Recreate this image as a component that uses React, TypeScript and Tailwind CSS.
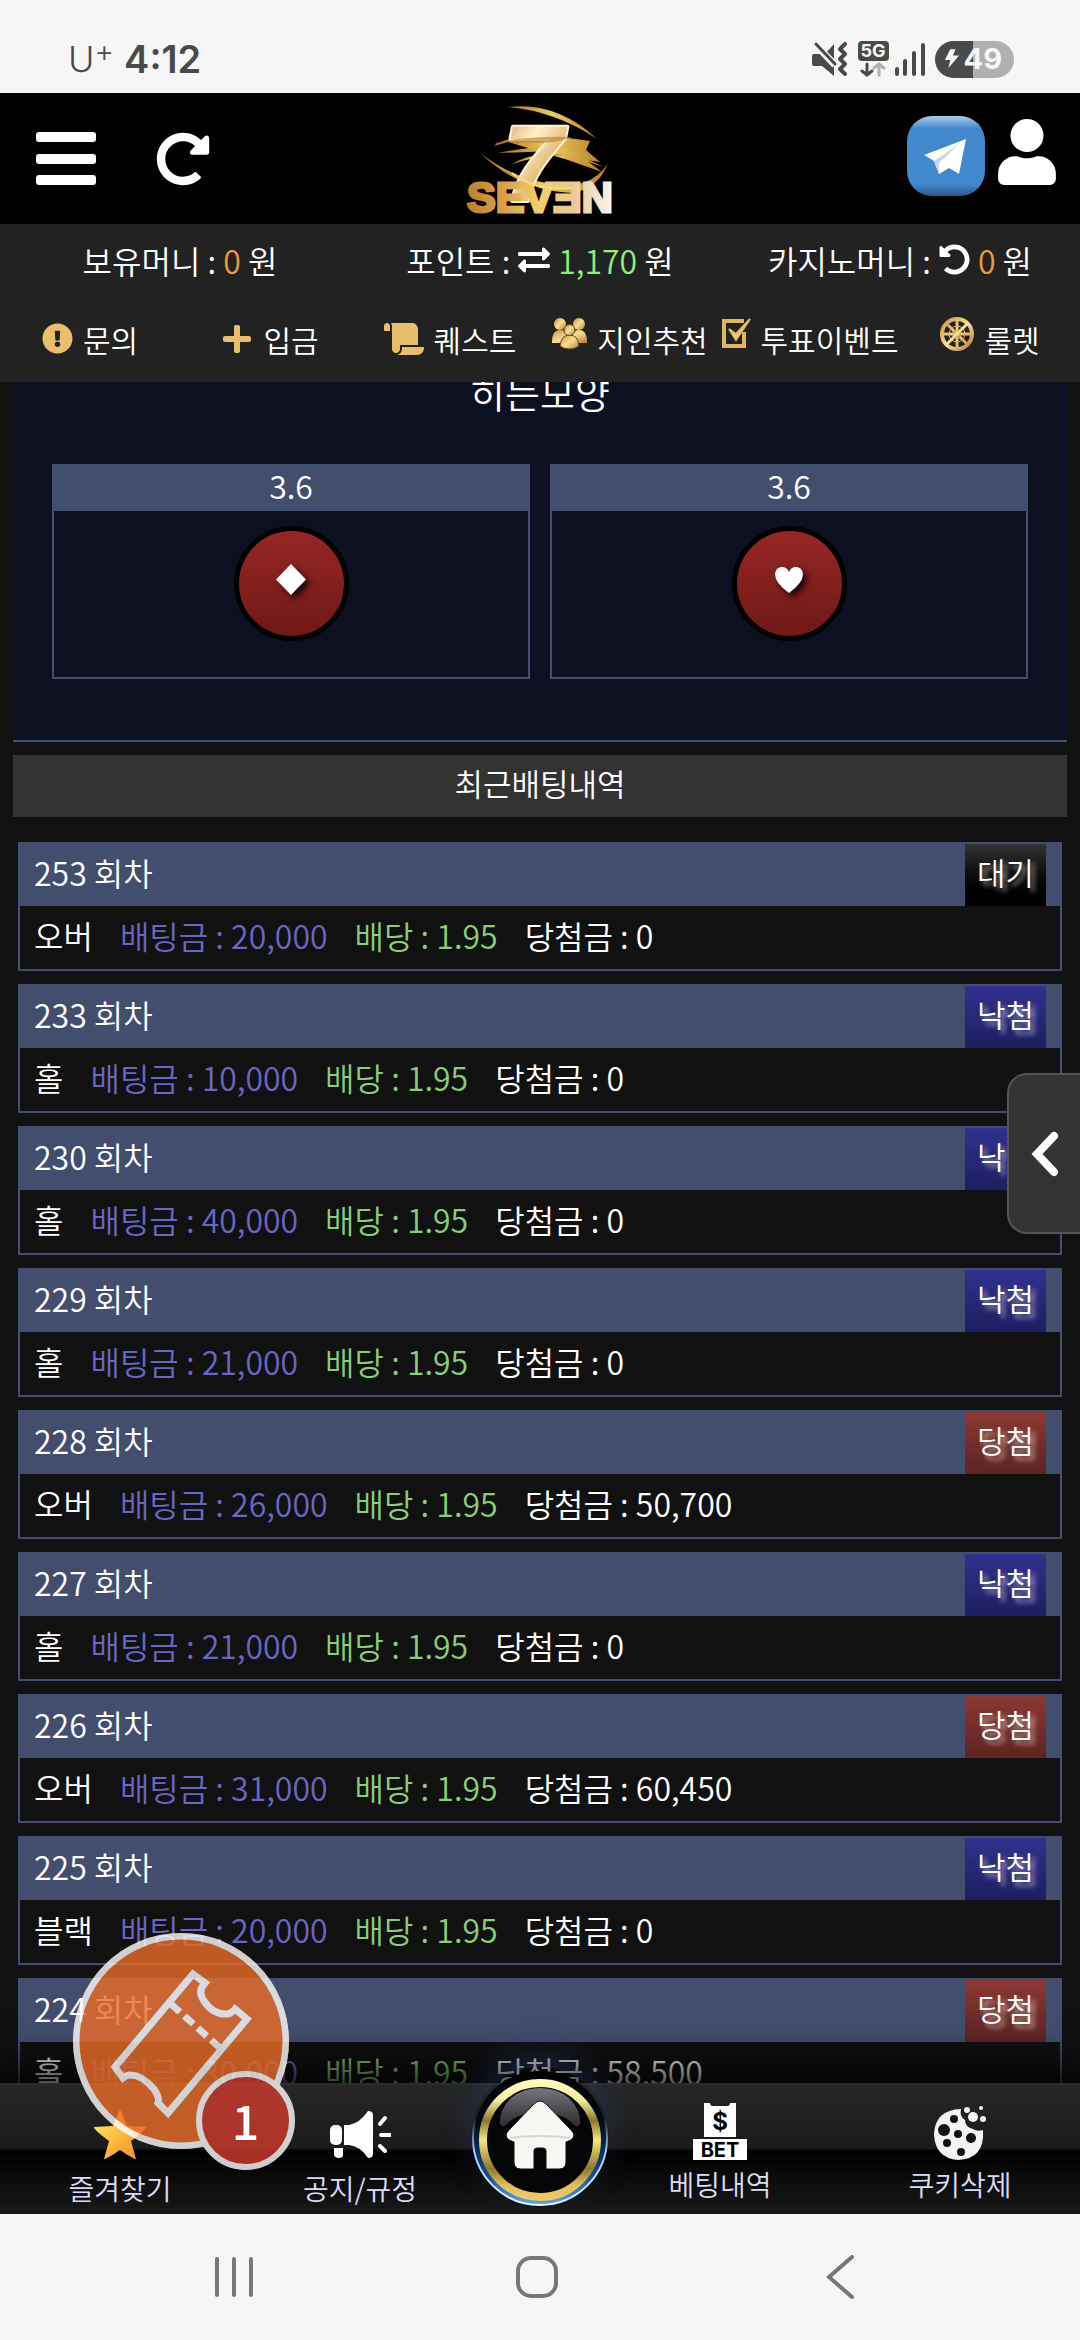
import React from "react";
import {
  FaExchangeAlt,
  FaExclamationCircle,
  FaPlus,
  FaRedoAlt,
  FaScroll,
  FaUndoAlt,
  FaUser,
} from "react-icons/fa";

type Result = "대기" | "낙첨" | "당첨";

interface Bet {
  round: number;
  pick: string;
  stake: string;
  odds: string;
  payout: string;
  result: Result;
}

const bets: Bet[] = [
  { round: 253, pick: "오버", stake: "20,000", odds: "1.95", payout: "0", result: "대기" },
  { round: 233, pick: "홀", stake: "10,000", odds: "1.95", payout: "0", result: "낙첨" },
  { round: 230, pick: "홀", stake: "40,000", odds: "1.95", payout: "0", result: "낙첨" },
  { round: 229, pick: "홀", stake: "21,000", odds: "1.95", payout: "0", result: "낙첨" },
  { round: 228, pick: "오버", stake: "26,000", odds: "1.95", payout: "50,700", result: "당첨" },
  { round: 227, pick: "홀", stake: "21,000", odds: "1.95", payout: "0", result: "낙첨" },
  { round: 226, pick: "오버", stake: "31,000", odds: "1.95", payout: "60,450", result: "당첨" },
  { round: 225, pick: "블랙", stake: "20,000", odds: "1.95", payout: "0", result: "낙첨" },
  { round: 224, pick: "홀", stake: "30,000", odds: "1.95", payout: "58,500", result: "당첨" },
];

const resultStyle: Record<Result, string> = {
  대기: "from-[#333333] to-black",
  낙첨: "from-[#31318f] to-[#1e1e60]",
  당첨: "from-[#8c3835] to-[#5c2422]",
};

function StatusBar() {
  return (
    <div className="flex h-[93px] shrink-0 items-center justify-between bg-[#f6f6f6] pt-[25px] pr-[66px] pl-[68px] font-[Inter,sans-serif] text-[#4a4a4a]">
      <div className="flex items-center gap-[10px]">
        <span className="flex items-start text-4xl font-light">
          U<span className="text-[30px] leading-6">+</span>
        </span>
        <span className="text-[38px] font-semibold">4:12</span>
      </div>
      <div className="flex items-center gap-[6px]">
        <svg width="36" height="34" viewBox="0 0 36 34" fill="#4a4a4a" aria-label="vibrate">
          <path d="M13 12 22 2v20zM2 12h8l12 10v12L10 24H2q-2 0-2-2v-8q0-2 2-2z" />
          <path d="m3 2 20 21" stroke="#f6f6f6" strokeWidth="7" />
          <path d="m4 2 19 20" stroke="#4a4a4a" strokeWidth="3" strokeLinecap="round" />
          <path d="m33 2-5 5 5 5-5 5 5 5-5 5 5 5" fill="none" stroke="#4a4a4a" strokeWidth="4" strokeLinejoin="round" strokeLinecap="round" />
        </svg>
        <div className="flex flex-col items-center pl-1">
          <span className="h-5 rounded-[4px] bg-[#4a4a4a] px-[3px] text-[18px] leading-5 font-bold text-[#f6f6f6]">5G</span>
          <svg width="26" height="16" viewBox="0 0 26 16" fill="none" strokeWidth="3" strokeLinecap="round">
            <path d="M7 3v11M2 10l5 4 5-4" stroke="#4a4a4a" />
            <path d="M19 14V3m-5 4 5-4 5 4" stroke="#b0b0b0" />
          </svg>
        </div>
        <svg width="30" height="34" viewBox="0 0 30 34" stroke="#4a4a4a" strokeWidth="4" strokeLinecap="round" aria-label="signal">
          <path d="M2 27v5M10 19v13M19 11v21M28 3v29" />
        </svg>
        <div className="ml-1 flex h-[37px] items-center gap-1 rounded-full bg-[linear-gradient(90deg,#4a4a4a_48%,#b0b0b0_48%)] pr-3 pl-[9px] text-[29px] font-bold text-[#f6f6f6]">
          <svg width="16" height="20" viewBox="0 0 18 22" fill="currentColor">
            <path d="M7 0h6l-3 7h7L5 21l2-9H1z" />
          </svg>
          <span>49</span>
        </div>
      </div>
    </div>
  );
}

function Logo() {
  return (
    <svg width="148" height="112" viewBox="0 0 148 112" aria-label="7 SEVEN">
      <defs>
        <linearGradient id="goldWord" x1="0" y1="0" x2="1" y2="0">
          <stop offset="0" stopColor="#bd802a" />
          <stop offset=".25" stopColor="#d9a04a" />
          <stop offset=".5" stopColor="#f1cf6a" />
          <stop offset=".72" stopColor="#e8c995" />
          <stop offset="1" stopColor="#fbf6f0" />
        </linearGradient>
        <linearGradient id="goldSeven" x1="0" y1="0" x2=".7" y2="1">
          <stop offset="0" stopColor="#c88f31" />
          <stop offset=".4" stopColor="#fff0cf" />
          <stop offset=".65" stopColor="#e5bd78" />
          <stop offset="1" stopColor="#fff6dc" />
        </linearGradient>
        <linearGradient id="swoosh" x1="0" y1="0" x2="1" y2="0">
          <stop offset="0" stopColor="#9a6a1c" />
          <stop offset=".5" stopColor="#f0cc62" />
          <stop offset="1" stopColor="#b67e22" />
        </linearGradient>
      </defs>
      <g fill="url(#swoosh)">
        <path d="M41 4q50-6 90 32-42-28-90-32z" />
        <path d="m28 41 24-8 50 2 22 3-4 9 14 12-14-2 16 12-34-12-60-18-14 4 4-4z" />
        <path d="M32 50q30-6 58-8l48 22-50-16z" />
        <path d="M14 50q40 38 92 40 26-4 36-30-12 20-38 22Q56 82 14 50z" />
        <path d="M44 62q24-14 54-10-26 0-54 10z" />
      </g>
      <text x="37" y="98" fontFamily="Liberation Sans, sans-serif" fontWeight="700" fontStyle="italic" fontSize="108" fill="url(#goldSeven)" stroke="#fff3d6" strokeWidth="4" strokeLinejoin="round" paintOrder="stroke">7</text>
      <path d="M42 37q36-4 64-3-24 10-64 3z" fill="#b67c24" opacity=".6" />
      <text x="1" y="109" fontFamily="Liberation Sans, sans-serif" fontWeight="700" fontSize="43" fill="url(#goldWord)" stroke="url(#goldWord)" strokeWidth="3">SEVƎN</text>
      <path d="M46 70q22 18 60 15" fill="none" stroke="#f7dc7c" strokeWidth="2" />
    </svg>
  );
}

function TelegramIcon() {
  return (
    <svg width="78" height="80" viewBox="0 0 78 80" aria-hidden="true">
      <defs>
        <linearGradient id="tg" x1="0" y1="0" x2="0" y2="1">
          <stop offset="0" stopColor="#a9cbe9" />
          <stop offset=".16" stopColor="#4288cd" />
          <stop offset=".85" stopColor="#4288cd" />
          <stop offset="1" stopColor="#2b5a88" />
        </linearGradient>
      </defs>
      <rect width="78" height="80" rx="25" fill="url(#tg)" />
      <path d="m17 39 42-16-7 35-10-6-10 6-5-13z" fill="#fff" />
      <path d="m27 45 25-17-20 19v11z" fill="#c5d7e8" />
    </svg>
  );
}

function AppHeader() {
  return (
    <header className="relative flex h-[131px] shrink-0 items-center justify-between bg-black pr-6 pl-9 text-white">
      <div className="flex items-center gap-[60px]">
        <button type="button" aria-label="메뉴">
          <svg width="60" height="54" viewBox="0 0 60 54" fill="currentColor">
            <rect width="60" height="10" rx="3" />
            <rect y="22" width="60" height="10" rx="3" />
            <rect y="43" width="60" height="10" rx="3" />
          </svg>
        </button>
        <button type="button" aria-label="새로고침">
          <FaRedoAlt size={54} />
        </button>
      </div>
      <a href="#home" aria-label="SEVEN" className="absolute left-1/2 -translate-x-1/2">
        <Logo />
      </a>
      <div className="flex items-center gap-[13px] pb-[6px]">
        <a href="#telegram" aria-label="텔레그램">
          <TelegramIcon />
        </a>
        <button type="button" aria-label="내 정보" className="pb-2">
          <FaUser className="h-[66px] w-[58px]" />
        </button>
      </div>
    </header>
  );
}

function GoldDefs() {
  return (
    <defs>
      <linearGradient id="gold" x1="0" y1="0" x2="1" y2="1">
        <stop offset="0" stopColor="#c98f45" />
        <stop offset=".5" stopColor="#f6e08e" />
        <stop offset="1" stopColor="#b87a35" />
      </linearGradient>
    </defs>
  );
}

function PeopleIcon() {
  return (
    <svg width="35" height="32" viewBox="0 0 35 32" fill="url(#gold)">
      <GoldDefs />
      <circle cx="8" cy="6" r="6" />
      <circle cx="27" cy="6" r="6" />
      <path d="M0 24q0-12 8-12 6 0 7 5l-6 8H0zM35 24q0-12-8-12-6 0-7 5l6 8h9z" />
      <g stroke="#5c4520" strokeWidth="1">
        <path d="M8 28q1-11 9.500-11T27 28q-4 3-9.500 3T8 28z" />
        <circle cx="17.500" cy="12" r="5.500" />
      </g>
    </svg>
  );
}

function VoteIcon() {
  return (
    <svg width="29" height="32" viewBox="0 0 29 32" fill="none">
      <path d="M22 3H2v25h20V14" stroke="#e0b65e" strokeWidth="4" />
      <path d="m7 11 7 11L28 1 14 16z" fill="#f3d987" stroke="#e5b963" strokeWidth="2" />
    </svg>
  );
}

function WheelIcon() {
  return (
    <svg width="34" height="34" viewBox="0 0 34 34" fill="none" stroke="url(#gold)">
      <circle cx="17" cy="17" r="15" strokeWidth="4" />
      <path d="m17 2 .1 30M2 17l30 .1M6 6l22 22M28 6 6 28" strokeWidth="3" />
      <circle cx="17" cy="17" r="8" strokeWidth="1" />
      <circle cx="17" cy="17" r="3" fill="#f6e08e" strokeWidth="2" />
    </svg>
  );
}

const menu = [
  { label: "문의", icon: <FaExclamationCircle size={31} />, raised: false },
  { label: "입금", icon: <FaPlus size={32} />, raised: false },
  { label: "퀘스트", icon: <FaScroll className="h-8 w-10" />, raised: false },
  { label: "지인추천", icon: <PeopleIcon />, raised: true },
  { label: "투표이벤트", icon: <VoteIcon />, raised: true },
  { label: "룰렛", icon: <WheelIcon />, raised: true },
];

function InfoBar() {
  return (
    <section className="shrink-0 bg-[#222222] leading-10 text-white">
      <div className="grid h-[77px] grid-cols-3 items-center pb-[6px] text-center text-[32px] whitespace-nowrap">
        <p>
          보유머니 : <span className="text-[#eb9c3c]">0</span> 원
        </p>
        <p className="flex items-center justify-center gap-2">
          포인트 :
          <button type="button" aria-label="포인트 전환">
            <FaExchangeAlt size={32} />
          </button>
          <span>
            <span className="text-[#8bf177]">1,170</span> 원
          </span>
        </p>
        <p className="flex items-center justify-center gap-2">
          카지노머니 :
          <button type="button" aria-label="카지노머니 새로고침">
            <FaUndoAlt size={31} />
          </button>
          <span>
            <span className="text-[#eb9c3c]">0</span> 원
          </span>
        </p>
      </div>
      <nav className="grid h-[81px] grid-cols-6 items-center pb-[6px] text-[30px]">
        {menu.map((m) => (
          <a key={m.label} href={"#" + m.label} className="flex items-center justify-center gap-[10px] whitespace-nowrap">
            <span className={m.raised ? "shrink-0 pb-[10px] text-[#eabf6b]" : "shrink-0 text-[#eabf6b]"}>{m.icon}</span>
            {m.label}
          </a>
        ))}
      </nav>
    </section>
  );
}

function SuitOption({ odds, label, children }: { odds: string; label: string; children: React.ReactNode }) {
  return (
    <div className="border-2 border-[#434e6e] pb-9">
      <div className="h-[45px] bg-[#434e6e] text-center text-[32px] leading-[38px]">{odds}</div>
      <div className="flex justify-center pt-[15px]">
        <button
          type="button"
          aria-label={label}
          className="flex size-[115px] items-center justify-center rounded-full border-[5px] border-black bg-linear-to-b from-[#962625] to-[#6f1917] pb-2"
        >
          {children}
        </button>
      </div>
    </div>
  );
}

function BetCard({ bet }: { bet: Bet }) {
  return (
    <li className="border-2 border-[#434e6e] text-[32px]">
      <div className="flex h-[62px] items-center justify-between bg-[#434e6e] pr-[14px] pl-[14px]">
        <span className="pb-[6px]">{bet.round} 회차</span>
        <span
          className={
            "flex h-full items-center bg-linear-to-b px-3 pb-[6px] text-[31px] [text-shadow:4px_4px_5px_rgba(255,255,255,0.6)] " +
            resultStyle[bet.result]
          }
        >
          {bet.result}
        </span>
      </div>
      <div className="flex h-[63px] items-center gap-[27px] pb-[6px] pl-[14px]">
        <span>{bet.pick}</span>
        <span className="text-[#6a67c4]">배팅금 : {bet.stake}</span>
        <span className="text-[#88cf75]">배당 : {bet.odds}</span>
        <span>당첨금 : {bet.payout}</span>
      </div>
    </li>
  );
}

function StarIcon() {
  return (
    <svg width="54" height="52" viewBox="0 0 54 52">
      <defs>
        <linearGradient id="star" x1="0" y1="0" x2="1" y2="1">
          <stop offset=".2" stopColor="#ffdf4d" />
          <stop offset=".6" stopColor="#fbb03c" />
          <stop offset="1" stopColor="#e88a2a" />
        </linearGradient>
      </defs>
      <path d="m27 1 7 17 19 1q1 2-15 14l5 18q-1 1-16-9-15 10-16 9l5-18Q0 21 1 19l19-1z" fill="url(#star)" />
    </svg>
  );
}

function MegaphoneIcon() {
  return (
    <svg width="62" height="50" viewBox="0 0 62 50" fill="#fff">
      <rect x="1" y="15" width="12" height="20" rx="5" />
      <path d="M15 15h5q11-2 19-14 5 0 5 4v39q0 4-5 4-8-12-19-13h-5zM5 38h9v7q0 3-4 3t-5-3z" />
      <path d="m51 14 5-6M52 25h9M51 36l5 5" stroke="#fff" strokeWidth="4" strokeLinecap="round" />
    </svg>
  );
}

function BetIcon() {
  return (
    <svg width="54" height="58" viewBox="0 0 54 58">
      <path d="M11 1h6q0 3 3 3h14q3 0 3-3h6v34H11z" fill="#fff" />
      <text x="27" y="28" textAnchor="middle" fontFamily="Inter, sans-serif" fontWeight="700" fontSize="24">$</text>
      <rect y="37" width="54" height="21" fill="#fff" />
      <text x="27" y="55" textAnchor="middle" fontFamily="Inter, sans-serif" fontWeight="700" fontSize="20">BET</text>
    </svg>
  );
}

function CookieIcon() {
  return (
    <svg width="54" height="54" viewBox="0 0 54 54" fill="#f4f4f4">
      <path d="M28 3q-2 7 4 11 0 7 8 9 4 3 10 1 2 29-25 30Q2 52 1 28 2 4 28 3z" />
      <circle cx="40" cy="11" r="5" />
      <circle cx="34" cy="4" r="3" />
      <circle cx="48" cy="2" r="2" />
      <circle cx="50" cy="13" r="3" />
      <g fill="#111">
        <circle cx="21" cy="13" r="4" />
        <circle cx="11" cy="24" r="6" />
        <circle cx="25" cy="28" r="4" />
        <circle cx="38" cy="32" r="5" />
        <circle cx="14" cy="37" r="4" />
        <circle cx="28" cy="46" r="4" />
      </g>
    </svg>
  );
}

function HomeButton() {
  return (
    <svg width="138" height="140" viewBox="0 0 138 140" aria-hidden="true">
      <defs>
        <linearGradient id="blueRim" x1="0" y1="0" x2="0" y2="1">
          <stop offset="0" stopColor="#000" />
          <stop offset=".4" stopColor="#020b1c" />
          <stop offset=".8" stopColor="#17509c" />
          <stop offset="1" stopColor="#5fa8f0" />
        </linearGradient>
        <linearGradient id="rimLine" x1="0" y1="0" x2="0" y2="1">
          <stop offset=".35" stopColor="#d9ecff" stopOpacity="0" />
          <stop offset=".6" stopColor="#9cc9f5" />
          <stop offset="1" stopColor="#e8fbff" />
        </linearGradient>
        <linearGradient id="ring" x1="0" y1="0" x2="0" y2="1">
          <stop offset="0" stopColor="#fffbb8" />
          <stop offset=".15" stopColor="#f7efa0" />
          <stop offset=".33" stopColor="#8c772a" />
          <stop offset=".5" stopColor="#f3e77c" />
          <stop offset=".75" stopColor="#8f7a2c" />
          <stop offset=".9" stopColor="#e3bf5a" />
          <stop offset="1" stopColor="#f0c868" />
        </linearGradient>
        <linearGradient id="gloss" x1="0" y1="0" x2="0" y2="1">
          <stop offset="0" stopColor="#77757c" />
          <stop offset="1" stopColor="#2c2b30" />
        </linearGradient>
      </defs>
      <circle cx="69" cy="71" r="67" fill="url(#blueRim)" stroke="url(#rimLine)" strokeWidth="2" />
      <circle cx="69" cy="73" r="57" fill="#050507" stroke="url(#ring)" strokeWidth="8" />
      <path d="M29 57q-1-14 11-26 12-10 29-10t29 10q12 12 11 26-3 6-10-3-30-20-60 0-7 9-10 3z" fill="url(#gloss)" />
      <path d="M69 34q3 0 6 3l26 27q4 5-1 9l-5 2v20q0 7-7 7H75V84q0-3-3-3h-6q-3 0-3 3v18H50q-7 0-7-7V75l-5-2q-5-4-1-9l26-27q3-3 6-3z" fill="#f6f6f2" stroke="#111" strokeWidth="1" />
      <path d="M38 71q31-4 62 0" stroke="#d8d8d2" strokeWidth="2" fill="none" />
    </svg>
  );
}

function NavItem({ label, icon, raised = false }: { label: string; icon: React.ReactNode; raised?: boolean }) {
  return (
    <a
      href={"#" + label}
      className={
        "flex flex-col items-center justify-end text-[28px] leading-8 whitespace-nowrap text-[#dcdcf8] " +
        (raised ? "gap-2 pb-[14px]" : "gap-3 pb-[10px]")
      }
    >
      {icon}
      {label}
    </a>
  );
}

function BottomNav() {
  return (
    <nav className="relative grid h-[131px] shrink-0 grid-cols-[minmax(0,2fr)_minmax(0,2fr)_minmax(0,1fr)_minmax(0,2fr)_minmax(0,2fr)] border-t-2 border-[#2c2c2c] bg-[linear-gradient(180deg,#262626_0%,#1b1b1b_49%,#000_51%,#191919_100%)] shadow-[0_-6px_36px_12px_rgba(0,0,0,0.8)]">
      <NavItem label="즐겨찾기" icon={<StarIcon />} />
      <NavItem label="공지/규정" icon={<MegaphoneIcon />} />
      <a href="#home" aria-label="홈" className="-mt-[18px] flex justify-center">
        <span className="size-[138px] shrink-0 rounded-full shadow-[0_-14px_36px_-6px_rgba(60,80,160,0.4)]">
          <HomeButton />
        </span>
      </a>
      <NavItem label="베팅내역" icon={<BetIcon />} raised />
      <NavItem label="쿠키삭제" icon={<CookieIcon />} raised />
      <button type="button" aria-label="배팅카트 1" className="absolute bottom-[65px] left-[73px] size-[216px]">
        <span className="absolute inset-0 opacity-80">
          <svg className="size-full rounded-full bg-[#ec6d29]" viewBox="0 0 216 216" fill="none" stroke="#fff">
            <circle cx="108" cy="108" r="105" strokeWidth="7" />
            <path
              d="m120 41 12 9q-8 8-1 18 9 14 24 13 4-1 7-5l12 10-79 94-10-10q2-5-4-14-13-15-25-14-2 0-6 3l-8-11z"
              strokeWidth="7"
            />
            <path d="m98 71 48 43" strokeWidth="7" strokeDasharray="12 6" />
          </svg>
          <span className="absolute -right-[6px] -bottom-[21px] size-[99px] rounded-full border-[6px] border-white bg-[#d03a2e]" />
        </span>
        <span className="absolute -right-[6px] -bottom-[21px] flex size-[99px] items-center justify-center pb-1 text-[48px] leading-none font-medium text-white">
          1
        </span>
      </button>
    </nav>
  );
}

function SystemNav() {
  return (
    <div className="relative grid h-[126px] shrink-0 grid-cols-3 place-items-center bg-[#f6f6f6] pr-[88px] pl-[82px] text-[#777777]">
      <button type="button" aria-label="최근 앱">
        <svg width="40" height="42" viewBox="0 0 40 42" stroke="currentColor" strokeWidth="4" strokeLinecap="round">
          <path d="M3 3v36M20 3v36M37 3v36" />
        </svg>
      </button>
      <button type="button" aria-label="홈 화면">
        <svg width="42" height="42" viewBox="0 0 42 42" fill="none" stroke="currentColor" strokeWidth="4">
          <rect x="2" y="2" width="38" height="38" rx="13" />
        </svg>
      </button>
      <button type="button" aria-label="뒤로">
        <svg width="28" height="44" viewBox="0 0 28 44" fill="none" stroke="currentColor" strokeWidth="4" strokeLinecap="round">
          <path d="M26 2 3 22l23 20" />
        </svg>
      </button>
    </div>
  );
}

export default function App() {
  return (
    <div className="relative flex h-screen flex-col overflow-hidden bg-[#111111] font-['Noto_Sans_CJK_KR',sans-serif] font-[350] text-white">
      <StatusBar />
      <AppHeader />
      <InfoBar />
      <main className="min-h-0 flex-1 overflow-hidden px-[13px]">
        <section className="border-b-2 border-[#434e6e] bg-[#0d1020] px-[39px] pb-[61px]">
          <h2 className="-mt-[18px] mb-11 text-center text-[38px] leading-[56px]">히든모양</h2>
          <div className="grid grid-cols-2 gap-5">
            <SuitOption odds="3.6" label="다이아몬드">
              <svg width="30" height="31" viewBox="0 0 30 31" className="overflow-visible drop-shadow-[4px_4px_3px_rgba(0,0,0,0.8)]">
                <path d="m15 0 15 15.500L15 31 0 15.500z" fill="#fff" />
              </svg>
            </SuitOption>
            <SuitOption odds="3.6" label="하트">
              <svg width="28" height="26" viewBox="0 0 28 26" className="overflow-visible drop-shadow-[4px_4px_3px_rgba(0,0,0,0.8)]">
                <path d="M14 26Q0 16 0 7q1-7 7-7 5 0 7 5 2-5 7-5 6 0 7 7 0 9-14 19z" fill="#fff" />
              </svg>
            </SuitOption>
          </div>
        </section>
        <h3 className="mt-[13px] bg-[#333333] pb-[6px] text-center text-[31px] leading-[56px]">최근배팅내역</h3>
        <ul className="mt-[25px] flex flex-col gap-[13px] px-[5px]">
          {bets.map((b) => (
            <BetCard key={b.round} bet={b} />
          ))}
        </ul>
      </main>
      <BottomNav />
      <SystemNav />
      <button
        type="button"
        aria-label="패널 열기"
        className="absolute top-[1073px] right-0 flex h-[161px] w-[73px] items-center justify-center rounded-l-[20px] border-2 border-r-0 border-[#555555] bg-[#333333]"
      >
        <svg width="28" height="46" viewBox="0 0 28 46" fill="none" stroke="#fff" strokeWidth="8" strokeLinecap="round">
          <path d="M23 5 6 23l17 18" />
        </svg>
      </button>
    </div>
  );
}
